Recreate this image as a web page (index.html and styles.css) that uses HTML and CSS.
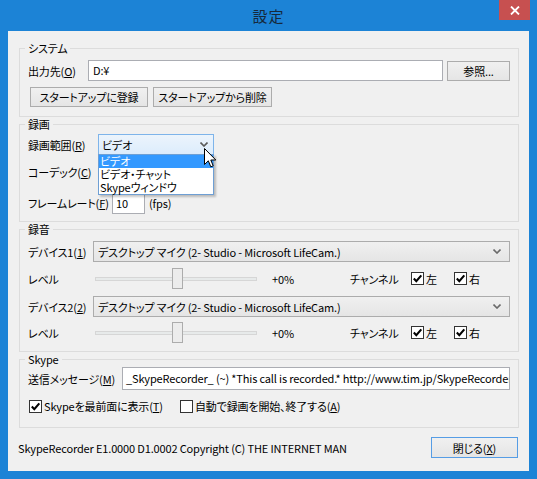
FILE: index.html
```html
<!DOCTYPE html>
<html lang="ja">
<head>
<meta charset="utf-8">
<title>設定</title>
<link rel="stylesheet" href="styles.css">
</head>
<body>
<div class="window">
  <div class="titlebar">
    <span></span>
    <span class="title">設定</span>
    <div class="close-wrap">
      <div class="close-btn">
        <svg width="10" height="9" viewBox="0 0 10 9"><path d="M1 0.5 L9 8.5 M9 0.5 L1 8.5" stroke="#fff" stroke-width="1.8" fill="none"/></svg>
      </div>
    </div>
  </div>
  <div class="client">
    <fieldset class="group g-system">
      <legend>システム</legend>
      <div class="row r-out">
        <label class="lbl w-out">出力先(<u>O</u>)</label>
        <div class="textbox grow">D:¥</div>
        <div class="btn b-browse">参照...</div>
      </div>
      <div class="row r-startup">
        <div class="btn b-reg">スタートアップに登録</div>
        <div class="btn b-del">スタートアップから削除</div>
      </div>
    </fieldset>

    <fieldset class="group g-video">
      <legend>録画</legend>
      <div class="row r-range">
        <label class="lbl w-range">録画範囲(<u>R</u>)</label>
        <div class="combo-wrap">
          <div class="combo open">
            <span class="combo-text">ビデオ</span>
            <svg class="chev" width="8" height="5" viewBox="0 0 8 5"><path d="M0.5 0.5 L4 4 L7.5 0.5" stroke="#5a5a5a" stroke-width="1.6" fill="none"/></svg>
          </div>
          <ul class="droplist">
            <li class="sel">ビデオ</li>
            <li>ビデオ・チャット</li>
            <li>Skypeウィンドウ</li>
          </ul>
        </div>
      </div>
      <div class="row r-codec">
        <label class="lbl w-range">コーデック(<u>C</u>)</label>
        <div class="combo small"><span class="combo-text"></span></div>
      </div>
      <div class="row r-fps">
        <label class="lbl w-fps">フレームレート(<u>F</u>)</label>
        <div class="textbox fps">10</div>
        <span class="fps-unit">(fps)</span>
      </div>
    </fieldset>

    <fieldset class="group g-audio">
      <legend>録音</legend>
      <div class="row r-dev1">
        <label class="lbl w-dev">デバイス1(<u>1</u>)</label>
        <div class="combo grow">
          <span class="combo-text">デスクトップ マイク (2- Studio - Microsoft LifeCam.)</span>
          <svg class="chev" width="8" height="5" viewBox="0 0 8 5"><path d="M0.5 0.5 L4 4 L7.5 0.5" stroke="#6a6a6a" stroke-width="1.6" fill="none"/></svg>
        </div>
      </div>
      <div class="row r-level1 level">
        <label class="lbl w-lvl">レベル</label>
        <div class="slider"><div class="track"></div><div class="thumb"></div></div>
        <span class="pct">+0%</span>
        <span class="ch-label">チャンネル</span>
        <span class="chk-item w-chk"><span class="cb on"><svg width="11" height="11" viewBox="0 0 11 11"><path d="M1.8 5.6 L4.3 8.2 L9.3 2.4" stroke="#000" stroke-width="2.1" fill="none"/></svg></span>左</span>
        <span class="chk-item"><span class="cb on"><svg width="11" height="11" viewBox="0 0 11 11"><path d="M1.8 5.6 L4.3 8.2 L9.3 2.4" stroke="#000" stroke-width="2.1" fill="none"/></svg></span>右</span>
      </div>
      <div class="row r-dev2">
        <label class="lbl w-dev">デバイス2(<u>2</u>)</label>
        <div class="combo grow">
          <span class="combo-text">デスクトップ マイク (2- Studio - Microsoft LifeCam.)</span>
          <svg class="chev" width="8" height="5" viewBox="0 0 8 5"><path d="M0.5 0.5 L4 4 L7.5 0.5" stroke="#6a6a6a" stroke-width="1.6" fill="none"/></svg>
        </div>
      </div>
      <div class="row r-level2 level">
        <label class="lbl w-lvl">レベル</label>
        <div class="slider"><div class="track"></div><div class="thumb"></div></div>
        <span class="pct">+0%</span>
        <span class="ch-label">チャンネル</span>
        <span class="chk-item w-chk"><span class="cb on"><svg width="11" height="11" viewBox="0 0 11 11"><path d="M1.8 5.6 L4.3 8.2 L9.3 2.4" stroke="#000" stroke-width="2.1" fill="none"/></svg></span>左</span>
        <span class="chk-item"><span class="cb on"><svg width="11" height="11" viewBox="0 0 11 11"><path d="M1.8 5.6 L4.3 8.2 L9.3 2.4" stroke="#000" stroke-width="2.1" fill="none"/></svg></span>右</span>
      </div>
    </fieldset>

    <fieldset class="group g-skype">
      <legend>Skype</legend>
      <div class="row r-msg">
        <label class="lbl w-msg">送信メッセージ(<u>M</u>)</label>
        <div class="textbox grow msg">_SkypeRecorder_ (~) *This call is recorded.* http://www.tim.jp/SkypeRecorder/</div>
      </div>
      <div class="row r-checks">
        <span class="chk-item c-front"><span class="cb on"><svg width="11" height="11" viewBox="0 0 11 11"><path d="M1.8 5.6 L4.3 8.2 L9.3 2.4" stroke="#000" stroke-width="2.1" fill="none"/></svg></span>Skypeを最前面に表示(<u>T</u>)</span>
        <span class="chk-item"><span class="cb"></span>自動で録画を開始、終了する(<u>A</u>)</span>
      </div>
    </fieldset>

    <div class="footer">
      <span class="copyright">SkypeRecorder E1.0000 D1.0002 Copyright (C) THE INTERNET MAN</span>
      <div class="btn b-close">閉じる(<u>X</u>)</div>
    </div>
  </div>
  <svg class="cursor" width="13" height="21" viewBox="0 0 13 21"><path d="M0.5 0.5 L0.5 16.5 L4.3 12.8 L6.8 18.8 L9.2 17.8 L6.8 12 L11.8 12 Z" fill="#fff" stroke="#000" stroke-width="1" stroke-linejoin="miter"/></svg>
</div>
</body>
</html>
```

FILE: styles.css
```css
* { box-sizing: border-box; }
html, body { margin: 0; padding: 0; }
body {
  font-family: "Noto Sans CJK JP", "Noto Sans", sans-serif;
  font-size: 11px;
  letter-spacing: -0.15px;
  color: #000;
  background: #1c83d6;
  font-feature-settings: "palt";
}
.window {
  position: relative;
  width: 537px;
  height: 479px;
  background: #1c83d6;
}
.titlebar {
  height: 31px;
  display: grid;
  grid-template-columns: 1fr auto 1fr;
  align-items: start;
}
.title {
  font-size: 15px;
  line-height: 31px;
  color: #16293b;
  letter-spacing: 1px;
}
.close-wrap { display: flex; justify-content: flex-end; padding-right: 7px; }
.close-btn {
  width: 31px;
  height: 20px;
  background: #c75050;
  display: flex;
  align-items: center;
  justify-content: center;
}
.client {
  margin: 0 8px;
  height: 440px;
  background: #f0f0f0;
  padding: 0 10px 0 11px;
  overflow: hidden;
}
.group {
  margin: 0;
  border: 1px solid #dcdcdc;
  padding: 0 8px 8px 8px;
  min-width: 0;
}
.group legend {
  padding: 0 3px;
  margin-left: -3px;
  line-height: 14px;
  font-size: 11px;
}
.g-system { margin-top: 10px; padding-bottom: 9px; }
.g-skype { padding-bottom: 14px; }
.row { display: flex; align-items: center; }
.lbl { white-space: nowrap; flex: none; }
.grow { flex: 1 1 auto; min-width: 0; }
u { text-decoration: underline; text-underline-offset: 1px; }

.textbox {
  height: 21px;
  background: #fff;
  border: 1px solid #abadb3;
  padding: 0 4px;
  line-height: 19px;
  white-space: nowrap;
  overflow: hidden;
}
.btn {
  height: 21px;
  border: 1px solid #acacac;
  background: linear-gradient(#f0f0f0, #e5e5e5);
  display: flex;
  align-items: center;
  justify-content: center;
  white-space: nowrap;
}

/* system */
.r-out { margin-top: 5px; height: 21px; }
.w-out { width: 60px; }
.b-browse { width: 63px; margin-left: 4px; height: 20px; }
.r-startup { margin-top: 6px; gap: 5px; padding-left: 2px; }
.b-reg { width: 118px; height: 20px; }
.b-del { width: 119px; height: 20px; }

/* video */
.r-range { margin-top: 3px; height: 21px; }
.w-range { width: 70px; }
.w-fps { width: 84px; }
.combo-wrap { position: relative; }
.combo {
  height: 21px;
  border: 1px solid #acacac;
  background: linear-gradient(#f0f0f0, #e5e5e5);
  display: flex;
  align-items: center;
  padding: 0 7px 0 4px;
  white-space: nowrap;
}
.combo-text { flex: 1 1 auto; overflow: hidden; }
.combo.open {
  width: 116px;
  border-color: #7eb4ea;
  background: linear-gradient(#ecf4fc, #dcecfc);
  padding: 0 5px 0 3px;
}
.combo.small { width: 116px; }
.droplist {
  position: absolute;
  left: 0;
  top: 20px;
  width: 116px;
  margin: 0;
  padding: 0;
  list-style: none;
  background: #fff;
  border: 1px solid #6e9fd4;
  box-shadow: 2px 2px 2px rgba(0,0,0,0.22);
  z-index: 2;
}
.droplist li { height: 13px; line-height: 13px; padding-left: 1px; white-space: nowrap; }
.droplist li.sel { background: #3399ff; color: #fff; }
.r-codec { margin-top: 6px; height: 21px; }
.r-fps { margin-top: 10px; height: 21px; }
.textbox.fps { width: 33px; height: 22px; line-height: 20px; padding-left: 3px; }
.fps-unit { margin-left: 4px; }

/* audio */
.r-dev1 { margin-top: 5px; height: 21px; }
.r-dev2 { margin-top: 7px; height: 21px; }
.r-level1 { margin-top: 6px; height: 21px; }
.r-level2 { margin-top: 5px; height: 21px; }
.w-dev { width: 65px; }
.combo.grow { padding-right: 8px; }
.w-lvl { width: 67px; }
.slider { position: relative; width: 162px; height: 21px; flex: none; }
.track {
  position: absolute; left: 0; right: 0; top: 9px; height: 4px;
  background: #e7eaea; border: 1px solid #d6d6d6;
}
.thumb {
  position: absolute; left: 77px; top: 0; width: 11px; height: 21px;
  background: #ececec; border: 1px solid #acacac;
}
.pct { width: 93px; padding-left: 15px; flex: none; }
.ch-label { width: 61px; flex: none; }
.chk-item { display: flex; align-items: center; white-space: nowrap; }
.w-chk { width: 43px; }
.cb {
  width: 13px; height: 13px; border: 1px solid #333;
  background: #fff; margin-right: 2px; flex: none;
  display: flex; align-items: center; justify-content: center;
}

/* skype */
.r-msg { margin-top: 1px; height: 23px; }
.w-msg { width: 94px; }
.textbox.msg { height: 23px; line-height: 21px; padding-left: 3px; }
.r-checks { margin-top: 9px; height: 14px; padding-left: 1px; }
.c-front { width: 151px; }

/* footer */
.footer {
  margin: 9px 1px 0 -1px;
  display: flex;
  align-items: center;
  justify-content: space-between;
}
.b-close {
  width: 87px;
  height: 21px;
  border-color: #569de5;
}
.cursor { position: absolute; left: 204px; top: 148px; z-index: 5; }
```
